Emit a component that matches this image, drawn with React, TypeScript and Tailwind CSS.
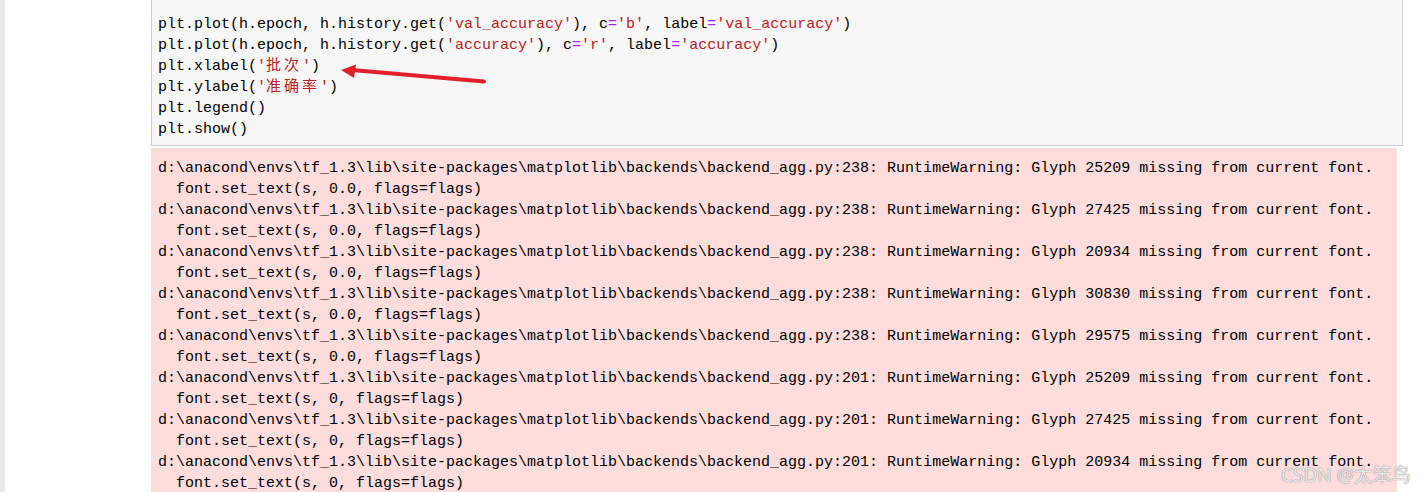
import React from 'react';

const S = ({ children }: { children: React.ReactNode }) => (
  <span className="text-[#ba2121]">{children}</span>
);
const Op = ({ children }: { children: React.ReactNode }) => (
  <span className="text-[#aa22ff]">{children}</span>
);
const Cjk = ({ children }: { children: React.ReactNode }) => (
  <span className="tracking-[3px]">{children}</span>
);

const warnings = [
  ['238', '25209', '0.0'],
  ['238', '27425', '0.0'],
  ['238', '20934', '0.0'],
  ['238', '30830', '0.0'],
  ['238', '29575', '0.0'],
  ['201', '25209', '0'],
  ['201', '27425', '0'],
  ['201', '20934', '0'],
];

export default function App() {
  return (
    <div className="relative flex h-[492px] overflow-hidden bg-white font-['Liberation_Mono','Noto_Sans_CJK_SC',monospace] text-[15px] leading-[21px] text-black">
      <div className="w-[5px] shrink-0 bg-[#e8e8e8]" />
      <div className="flex-1 pl-[146px] pr-[22px]">
        <div className="border border-t-0 border-[#cfcfcf] bg-[#f7f7f7] pl-[6px] pt-[14px] pb-[5px] whitespace-pre">
          <div>
            plt.plot(h.epoch, h.history.get(<S>'val_accuracy'</S>), c<Op>=</Op>
            <S>'b'</S>, label<Op>=</Op>
            <S>'val_accuracy'</S>)
          </div>
          <div>
            plt.plot(h.epoch, h.history.get(<S>'accuracy'</S>), c<Op>=</Op>
            <S>'r'</S>, label<Op>=</Op>
            <S>'accuracy'</S>)
          </div>
          <div>
            plt.xlabel(
            <S>
              '<Cjk>批次</Cjk>'
            </S>
            )
          </div>
          <div>
            plt.ylabel(
            <S>
              '<Cjk>准确率</Cjk>'
            </S>
            )
          </div>
          <div>plt.legend()</div>
          <div>plt.show()</div>
        </div>
        <div className="mt-[2px] mr-[6px] bg-[#ffdddd] pl-[7px] pt-[10px] whitespace-pre">
          {warnings.map(([line, glyph, pos], i) => (
            <div key={i}>
              <div>
                {`d:\\anacond\\envs\\tf_1.3\\lib\\site-packages\\matplotlib\\backends\\backend_agg.py:${line}: RuntimeWarning: Glyph ${glyph} missing from current font.`}
              </div>
              <div>{`  font.set_text(s, ${pos}, flags=flags)`}</div>
            </div>
          ))}
        </div>
      </div>

      <svg
        className="absolute left-[336px] top-[60px]"
        width="155"
        height="28"
        viewBox="0 0 155 28"
      >
        <path d="M148 21.5 L16 10" stroke="#e3202a" strokeWidth="4" strokeLinecap="round" />
        <path d="M5 10 L20 4.5 L18 18 Z" fill="#e3202a" />
      </svg>

      <div className="absolute left-[1281px] top-[463px] font-['Noto_Sans','Noto_Sans_CJK_SC',sans-serif] text-[19px] leading-[24px] text-white/80 [text-shadow:0_0_1px_#8a8a8a,0_0_1px_#8a8a8a]">
        CSDN @太笨鸟
      </div>
    </div>
  );
}
